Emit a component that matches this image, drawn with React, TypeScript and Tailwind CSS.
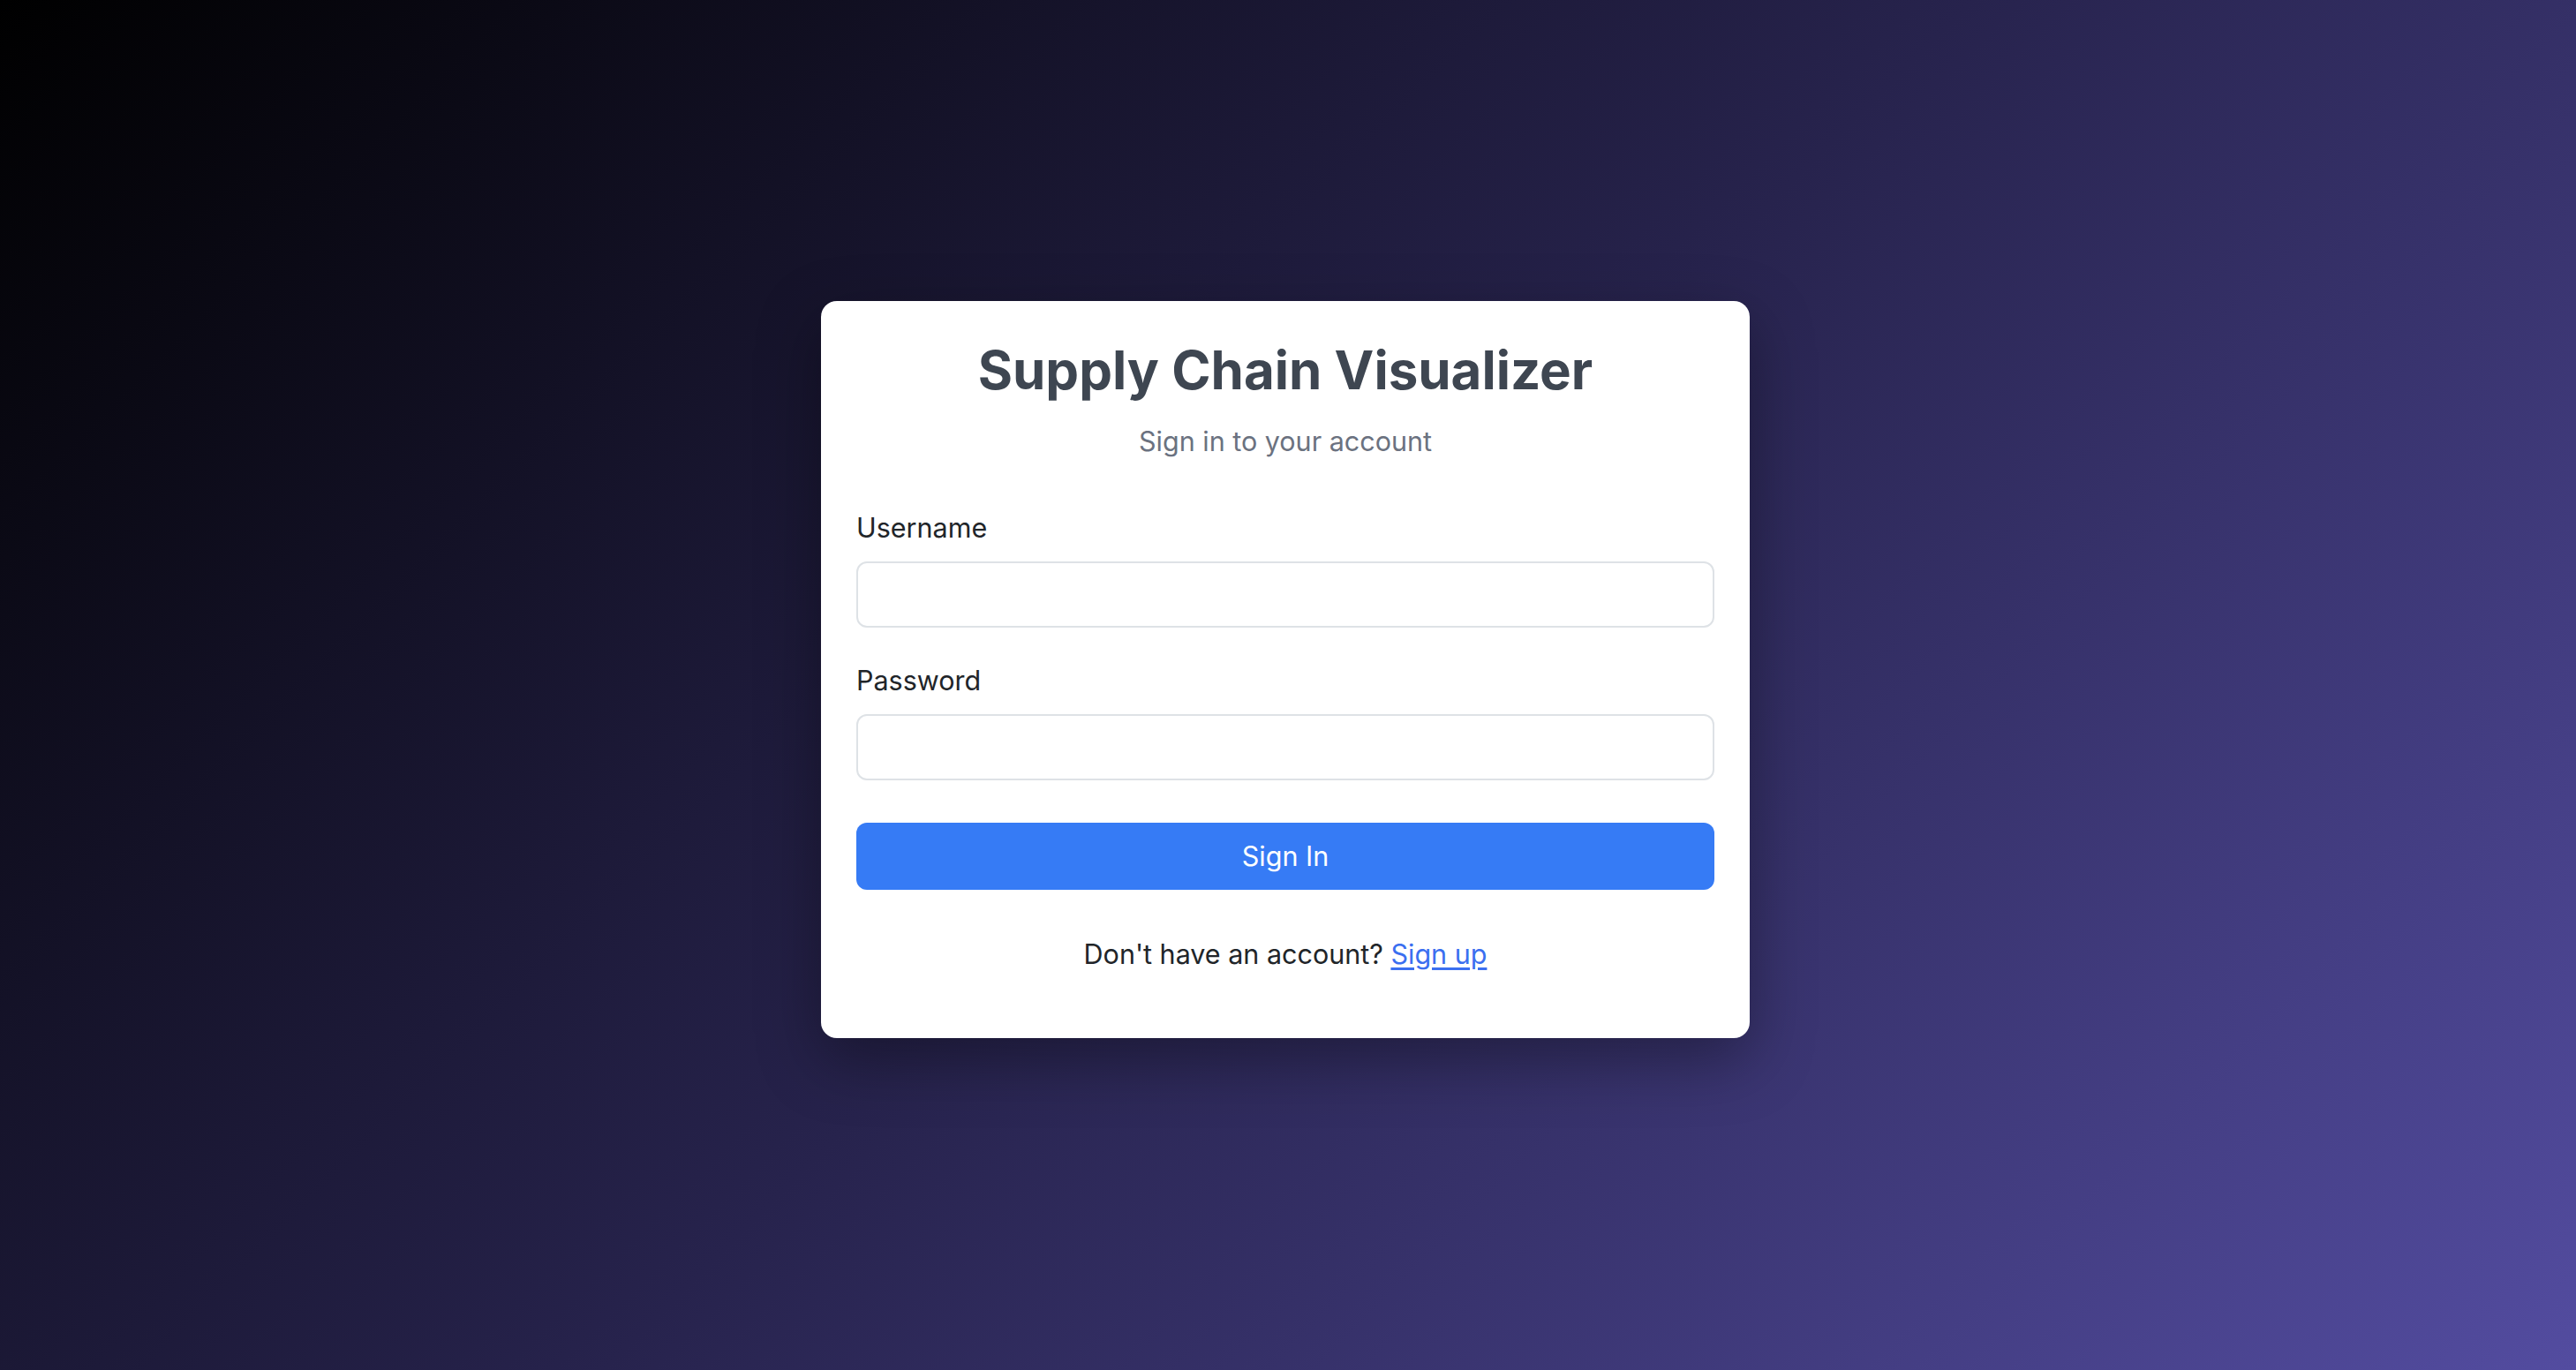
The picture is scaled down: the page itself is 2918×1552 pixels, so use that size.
export default function App() {
    return (
        <div className="min-h-screen w-full flex items-center justify-center pb-9 pr-[6px] bg-[linear-gradient(135deg,#000000_0%,#27234d_50%,#534ca0_100%)] font-['Inter','Noto_Sans',sans-serif]">
            <div className="w-[1052px] bg-white rounded-[18px] shadow-[0_24px_70px_rgba(0,0,0,0.35)] px-10 pt-[42px] pb-[73px]">
                <h1 className="text-center text-[60px] leading-[72px] font-bold text-[#3e4651]">Supply Chain Visualizer</h1>
                <p className="text-center text-[30.5px] leading-[45px] text-[#6b7280] mt-[22px]">Sign in to your account</p>

                <div className="mt-[53px] flex flex-col">
                    <label className="text-[30.5px] leading-[45px] text-[#212529] mb-4">Username</label>
                    <input type="text" className="h-[75px] w-full rounded-[12px] border-2 border-[#dee2e6] bg-white px-6 text-[30px] outline-none" />
                </div>

                <div className="mt-[37px] flex flex-col">
                    <label className="text-[30.5px] leading-[45px] text-[#212529] mb-4">Password</label>
                    <input type="password" className="h-[75px] w-full rounded-[12px] border-2 border-[#dee2e6] bg-white px-6 text-[30px] outline-none" />
                </div>

                <button className="mt-12 h-[76px] w-full rounded-[12px] bg-[#367bf5] text-white text-[30.5px] leading-[45px]">Sign In</button>

                <p className="mt-[50px] text-center text-[30.5px] leading-[45px] text-[#212529]">
                    Don't have an account? <a href="#" className="text-[#3b6ff0] underline underline-offset-[4px]">Sign up</a>
                </p>
            </div>
        </div>
    )
}
